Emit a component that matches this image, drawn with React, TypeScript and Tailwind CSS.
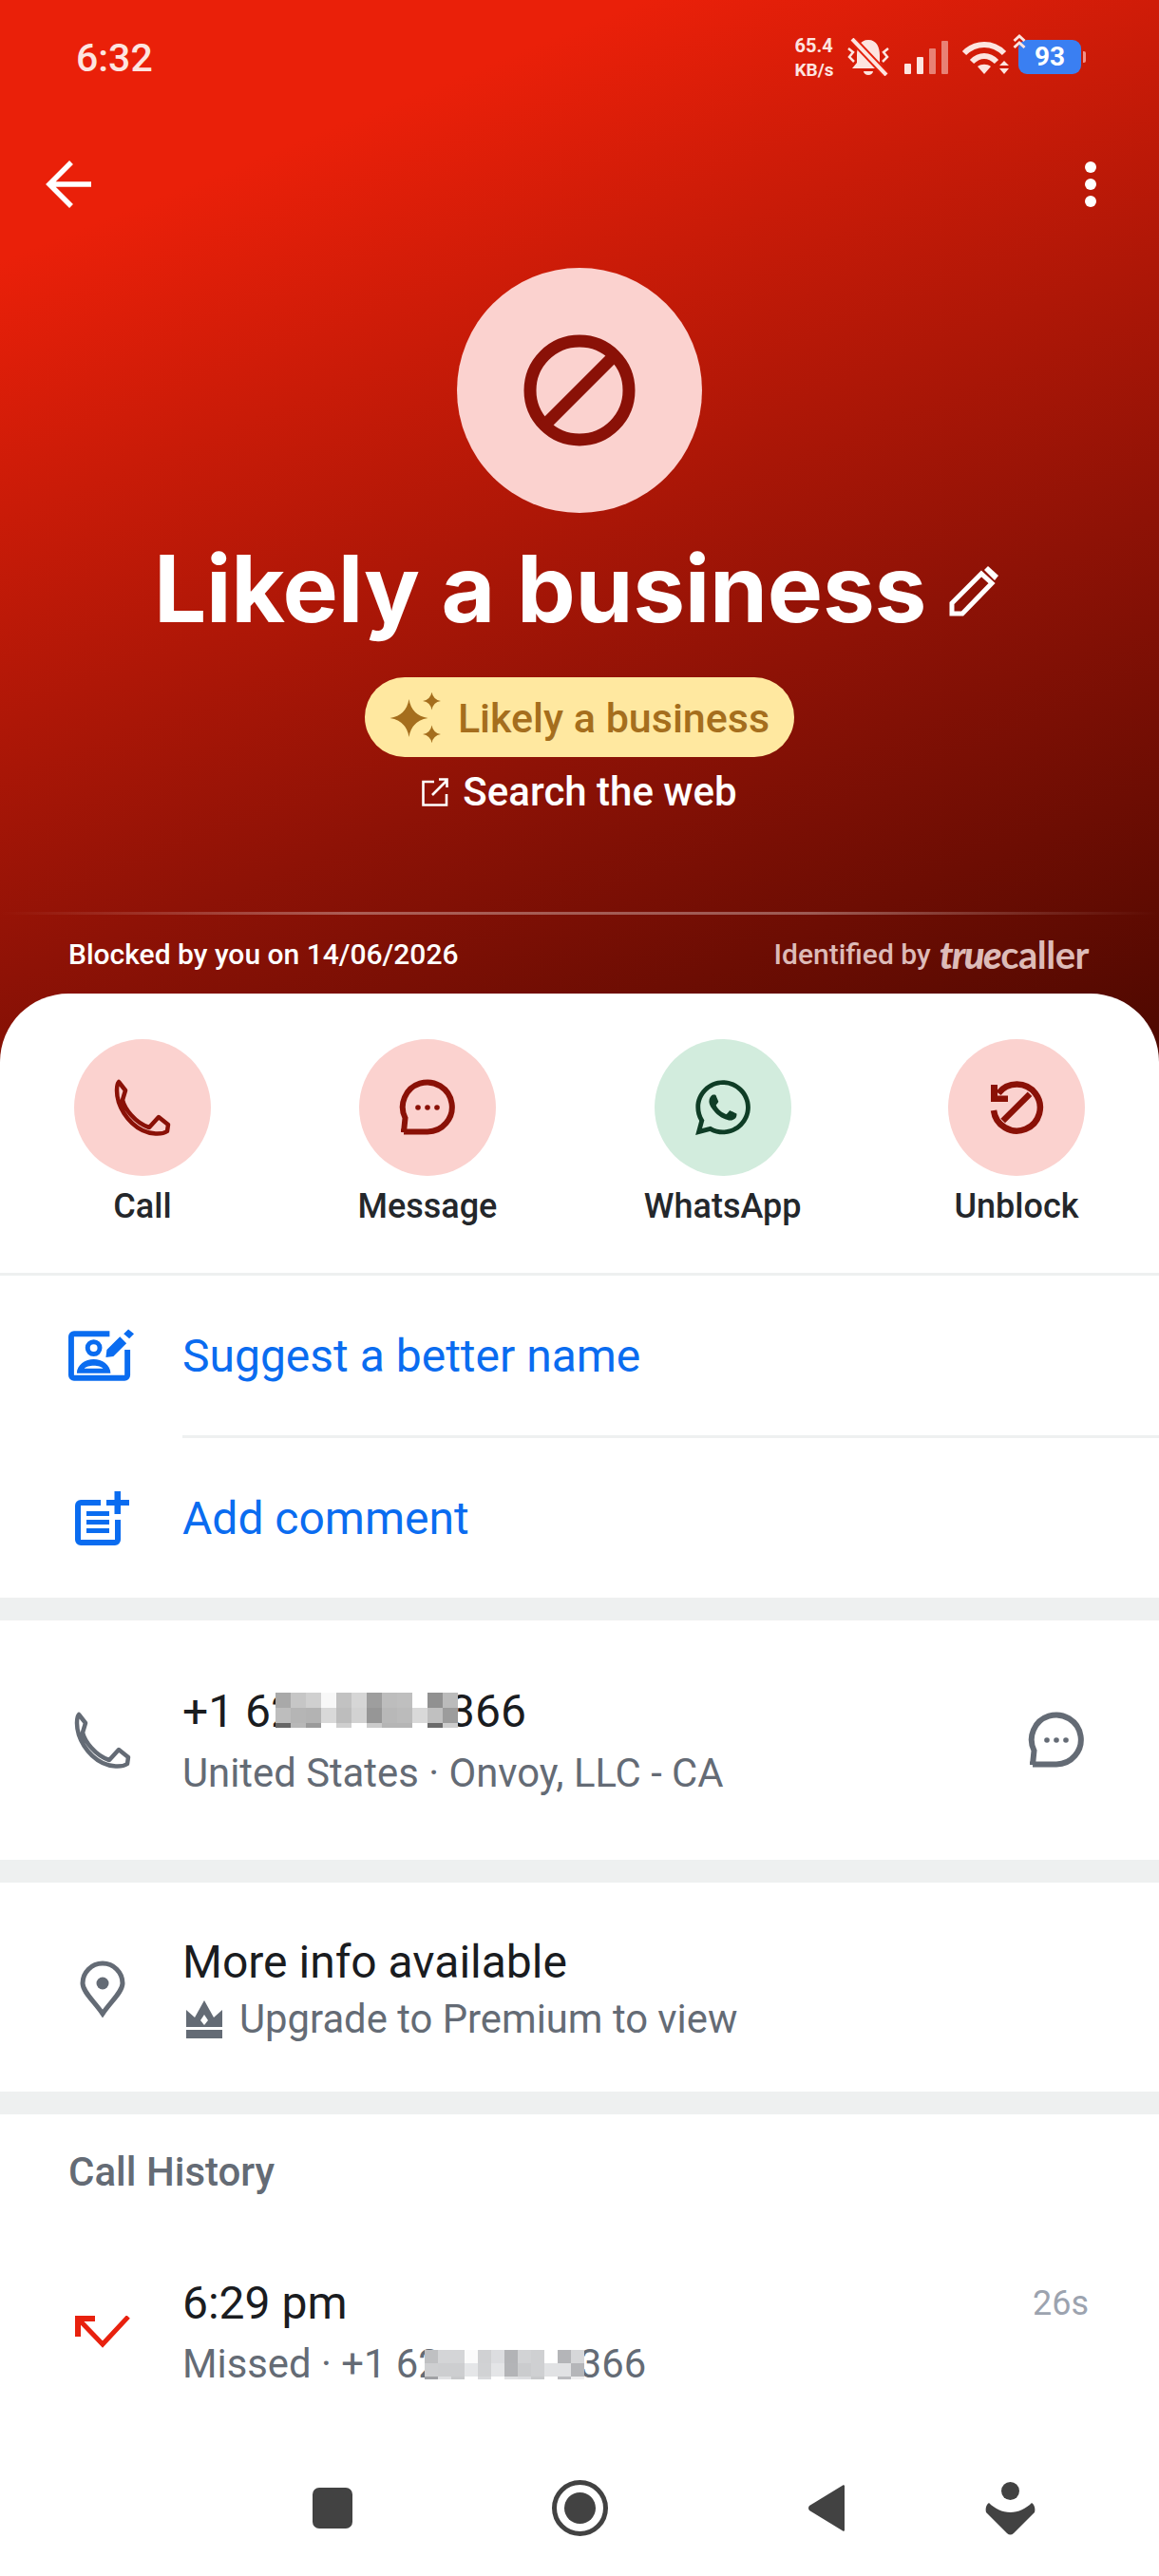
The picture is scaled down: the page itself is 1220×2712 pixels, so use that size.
import React from 'react';
import { FaWhatsapp } from 'react-icons/fa';

const darkMosaic = [
  ['#a9a9a9', '#c6c6c6', '#d0d0d0', '#f8f8f8', '#c2c2c2', '#d6d6d6', '#9e9e9e', '#bdbdbd', '#bfbfbf', '#ffffff', '#919191', '#bbbbbb'],
  ['#bdbdbd', '#b5b5b5', '#b3b3b3', '#d9d9d9', '#bdbdbd', '#d2d2d2', '#969696', '#b8b8b8', '#bbbbbb', '#d9d9d9', '#c0c0c0', '#9c9c9c'],
  ['#666666', '#b8b8b8', '#9a9a9a', '#ffffff', '#cfcfcf', '#ffffff', '#cbcbcb', '#b5b5b5', '#b5b5b5', '#ffffff', '#6a6a6a', '#cccccc'],
];

const lightMosaic = [
  ['#bfc0c2', '#d4d5d7', '#d4d5d7', '#fbfbfb', '#d0d1d3', '#dcdde0', '#b2b3b6', '#d2d3d5', '#cfd0d2', '#ffffff', '#b4b5b8', '#d6d7d9'],
  ['#cecfd1', '#cdced0', '#cdced0', '#e5e6e8', '#d1d2d4', '#e4e5e7', '#b3b4b7', '#cbccce', '#cfd0d2', '#e1e2e4', '#e1e2e4', '#b5b6b9'],
  ['#a0a1a4', '#e0e1e3', '#c8c9cb', '#ffffff', '#d9dadc', '#ffffff', '#e0e1e3', '#dcdde0', '#c8c9cb', '#ffffff', '#bbbcbf', '#eeeeef'],
];

function Mosaic({ rows, cell, last, className }: { rows: string[][]; cell: number; last: number; className: string }) {
  return (
    <div className={`absolute ${className}`}>
      {rows.map((row, i) => (
        <div key={i} className="flex">
          {row.map((c, j) => (
            <div key={j} style={{ width: cell, height: i === 2 ? last : cell, background: c }} />
          ))}
        </div>
      ))}
    </div>
  );
}

function PhoneIcon({ color }: { color: string }) {
  return (
    <svg width="60" height="60" viewBox="0 0 60 60" fill="none" stroke={color} strokeWidth="4.5" strokeLinejoin="round">
      <path d="M5 3 L12 12 L9 22 C11 31 22 46 37 51 L47 40 L57 48 L56 55 C50 59 38 58 30 54 C14 46 3 28 3 12 C3 8 3 5 5 3 Z" />
    </svg>
  );
}

function BubbleIcon({ color }: { color: string }) {
  return (
    <svg width="60" height="60" viewBox="0 0 60 60" fill="none">
      <path d="M5 56 L6.5 41 A26 26 0 1 1 30 55.5 H5 Z" stroke={color} strokeWidth="6" strokeLinejoin="miter" />
      <circle cx="20" cy="30" r="2.8" fill={color} />
      <circle cx="30" cy="30" r="2.8" fill={color} />
      <circle cx="40" cy="30" r="2.8" fill={color} />
    </svg>
  );
}

function StarIcon() {
  const star = (x: number, y: number, r: number) => {
    const k = r * 0.14;
    return `M${x} ${y - r} Q${x + k} ${y - k} ${x + r} ${y} Q${x + k} ${y + k} ${x} ${y + r} Q${x - k} ${y + k} ${x - r} ${y} Q${x - k} ${y - k} ${x} ${y - r} Z`;
  };
  return (
    <svg width="54" height="53" viewBox="0 0 54 53" fill="#a56e1d">
      <path d={star(20.5, 27, 20)} />
      <path d={star(44.5, 9, 9.5)} />
      <path d={star(44.5, 44, 9.5)} />
    </svg>
  );
}

function StatusBar() {
  return (
    <div className="flex h-[120px] items-center justify-between pl-[80px] pr-[77px] text-[#fde5e0]">
      <span className="mt-[3px] text-[41px] font-medium leading-none">6:32</span>
      <div className="flex items-center">
        <div className="flex w-[44px] flex-col font-bold leading-none">
          <span className="text-[20px]">65.4</span>
          <span className="mt-[6px] text-[19px]">KB/s</span>
        </div>
        <svg className="ml-[9px]" width="48" height="40" viewBox="0 0 48 40" fill="#fde5e0">
          <path d="M24 2 C15 2 12 10 12 18 V26 L7 32 H41 L36 26 V18 C36 10 33 2 24 2 Z" />
          <path d="M19 35 H29 A5 4 0 0 1 19 35 Z" />
          <path d="M3 11 L8 15 L4 20 L9 25 M45 11 L40 15 L44 20 L39 25" fill="none" stroke="#fde5e0" strokeWidth="2.5" />
          <path d="M7 1 L43 39" stroke="#e5200a" strokeWidth="8" />
          <path d="M7 1 L43 39" stroke="#fde5e0" strokeWidth="4" />
        </svg>
        <div className="ml-[14px] flex items-end gap-[5.5px]">
          <div className="h-[11px] w-[7.5px] rounded-[1px] bg-[#fde5e0]" />
          <div className="h-[18px] w-[7.5px] rounded-[1px] bg-[#fde5e0]" />
          <div className="h-[27px] w-[7.5px] rounded-[1px] bg-[#fde5e0]/50" />
          <div className="h-[35px] w-[7.5px] rounded-[1px] bg-[#fde5e0]/50" />
        </div>
        <svg className="ml-[14px]" width="50" height="38" viewBox="0 0 50 38" fill="none">
          <path d="M3 15 C15 3 33 3 45 15" stroke="#fde5e0" strokeWidth="6" />
          <path d="M11 24 C19 16 29 16 37 24" stroke="#fde5e0" strokeWidth="6" />
          <path d="M17 29 C21 26 27 26 31 29 L24 37 Z" fill="#fde5e0" />
          <path d="M45 23 L50 28 H40 Z M40 31 H50 L45 37 Z" fill="#fde5e0" />
        </svg>
        <div className="relative ml-[10px] flex items-center">
          <div className="flex h-[36px] w-[66px] items-center justify-center rounded-[9px] bg-[#3a7ff2] text-[28px] font-bold leading-none text-white">93</div>
          <div className="ml-[2px] h-[12px] w-[3px] rounded-r-[2px] bg-[#f0938a]" />
          <svg className="absolute -left-[6px] -top-[7px]" width="14" height="18" viewBox="0 0 14 18" fill="none" stroke="#fde5e0" strokeWidth="3">
            <path d="M1.5 8 L7 3 L12.5 8 M1.5 15 L7 10 L12.5 15" />
          </svg>
        </div>
      </div>
    </div>
  );
}

function Hero() {
  return (
    <div className="flex h-[1120px] flex-col bg-[linear-gradient(158deg,#ea2009_17%,#8e1206_64%,#4c0800_100%)] font-['Roboto',sans-serif] text-white">
      <StatusBar />
      <div className="mt-[36px] flex h-[76px] items-center justify-between pl-[48px] pr-[66px]">
        <svg width="48" height="50" viewBox="0 0 48 50" fill="none" stroke="white" strokeWidth="5.5">
          <path d="M48 25 H5 M27 2 L4 25 L27 48" />
        </svg>
        <div className="flex flex-col gap-[6px]">
          <div className="h-[12px] w-[12px] rounded-full bg-white" />
          <div className="h-[12px] w-[12px] rounded-full bg-white" />
          <div className="h-[12px] w-[12px] rounded-full bg-white" />
        </div>
      </div>
      <div className="mt-[50px] flex h-[258px] w-[258px] items-center justify-center self-center rounded-full bg-[#fbd2cf]">
        <svg width="118" height="118" viewBox="0 0 118 118" fill="none" stroke="#8a1107" strokeWidth="13">
          <circle cx="59" cy="59" r="52" />
          <path d="M95 23 L23 95" />
        </svg>
      </div>
      <div className="mt-[20px] flex h-[120px] items-center justify-center gap-[24px] pr-[7px]">
        <span className="font-['Inter',sans-serif] text-[98px] font-bold leading-[120px] tracking-[-0.3px]">Likely a business</span>
        <svg className="mt-[4px]" width="52" height="54" viewBox="0 0 52 54" fill="none" stroke="white" strokeWidth="5">
          <path d="M3 51 V40 L34 9 L45 19 L14 51 Z" />
          <path d="M37 5 L41 1 L52 11 L48 16 Z" fill="white" stroke="none" />
        </svg>
      </div>
      <div className="mt-[33px] flex h-[84px] items-center gap-[18px] self-center rounded-full bg-[#ffe8a0] px-[26px] text-[#a56e1d]">
        <StarIcon />
        <span className="pt-[2px] text-[43px] font-medium leading-none">Likely a business</span>
      </div>
      <div className="mt-[15px] flex h-[44px] items-center justify-center gap-[15px]">
        <svg width="28" height="30" viewBox="0 0 28 30" fill="none" stroke="white" strokeWidth="2.6">
          <path d="M13 4 H1.5 V28.5 H26 V17 M11 18 L26 3 M18 1.5 H26.5 V10" />
        </svg>
        <span className="text-[42px] font-medium leading-none">Search the web</span>
      </div>
      <div className="mt-[104px] h-[3px] bg-[linear-gradient(90deg,transparent,rgba(255,255,255,0.32)_30%,rgba(255,255,255,0.32)_70%,transparent)]" />
      <div className="mt-[20px] flex h-[44px] items-center justify-between pl-[72px] pr-[74px]">
        <span className="text-[30px] font-medium leading-none">Blocked by you on 14/06/2026</span>
        <div className="flex items-center text-[#ddbbb8]">
          <span className="text-[30px] font-medium leading-none">Identified by</span>
          <span className="ml-[9px] font-['Lato',sans-serif] text-[40px] font-black italic leading-none tracking-[-1.5px]">true</span>
          <span className="font-['Lato',sans-serif] text-[40px] font-bold leading-none tracking-[-0.5px]">caller</span>
        </div>
      </div>
    </div>
  );
}

function Action({ label, bg, icon }: { label: string; bg: string; icon: React.ReactNode }) {
  return (
    <div className="flex flex-col items-center">
      <div className={`flex h-[144px] w-[144px] items-center justify-center rounded-full ${bg}`}>{icon}</div>
      <span className="mt-[10px] text-[36px] font-medium leading-[44px] text-[#24272b]">{label}</span>
    </div>
  );
}

function Band() {
  return <div className="h-[24px] bg-[#eef0f0]" />;
}

function Row({ icon, className, children }: { icon: React.ReactNode; className: string; children: React.ReactNode }) {
  return (
    <div className={`flex items-center ${className}`}>
      <div className="ml-[72px] mr-[49px] flex w-[71px] shrink-0 justify-center">{icon}</div>
      {children}
    </div>
  );
}

export default function App() {
  return (
    <div className="flex h-[2712px] w-[1220px] flex-col overflow-hidden bg-white font-['Roboto',sans-serif]">
      <Hero />
      <div className="relative -mt-[74px] rounded-t-[72px] bg-white">
        <div className="flex justify-between px-[78px] pb-[48px] pt-[48px]">
          <Action label="Call" bg="bg-[#fbd2cf]" icon={<PhoneIcon color="#8a1107" />} />
          <Action label="Message" bg="bg-[#fbd2cf]" icon={<BubbleIcon color="#8a1107" />} />
          <Action label="WhatsApp" bg="bg-[#d2ecdd]" icon={<FaWhatsapp size={66} color="#0f3d26" />} />
          <Action
            label="Unblock"
            bg="bg-[#fbd2cf]"
            icon={
              <svg width="60" height="60" viewBox="0 0 60 60" fill="none" stroke="#8a1107" strokeWidth="6.5">
                <path d="M11 15 A24.5 24.5 0 1 1 6 33" />
                <path d="M44 15.7 L15.7 44" />
                <path d="M3 6 H10 V17.5 H21 V24 H3 Z" fill="#8a1107" stroke="none" />
              </svg>
            }
          />
        </div>
        <div className="h-[3px] bg-[#eef0f0]" />
        <Row
          className="h-[168px]"
          icon={
            <svg width="72" height="56" viewBox="0 0 72 56" fill="none">
              <path d="M44 5 H6 A3 3 0 0 0 3 8 V49 A3 3 0 0 0 6 52 H60 A3 3 0 0 0 63 49 V22" stroke="#0a6cf0" strokeWidth="6" />
              <circle cx="27" cy="20" r="6.5" stroke="#0a6cf0" strokeWidth="5" />
              <path d="M9 47 C9 38 18 32 27 32 C36 32 45 38 45 47 Z M17 42 C20 38 34 38 37 42 Z" fill="#0a6cf0" fillRule="evenodd" />
              <path d="M40 30 L41 22 L55 8 L62 15 L48 29 Z M59 5 L64 0 L70 5 L65 10 Z" fill="#0a6cf0" />
            </svg>
          }
        >
          <span className="pt-[2px] text-[48px] leading-none text-[#0a6cf0]">Suggest a better name</span>
        </Row>
        <div className="ml-[192px] h-[3px] bg-[#eef0f0]" />
        <Row
          className="h-[168px]"
          icon={
            <svg width="57" height="57" viewBox="0 0 57 57" fill="none">
              <path d="M27 12 H6 A3 3 0 0 0 3 15 V51 A3 3 0 0 0 6 54 H42 A3 3 0 0 0 45 51 V30" stroke="#0a6cf0" strokeWidth="6" />
              <path d="M41.5 0 H48 V9 H57 V15 H48 V24 H41.5 V15 H33 V9 H41.5 Z" fill="#0a6cf0" />
              <path d="M12 21 H36 V26 H12 Z M12 30 H36 V35 H12 Z M12 39 H36 V44 H12 Z" fill="#0a6cf0" />
            </svg>
          }
        >
          <span className="pt-[2px] text-[48px] leading-none text-[#0a6cf0]">Add comment</span>
        </Row>
        <Band />
        <div className="relative flex h-[252px] items-center pr-[78px]">
          <div className="ml-[72px] mr-[49px] flex w-[71px] shrink-0 justify-center">
            <PhoneIcon color="#646b75" />
          </div>
          <div className="flex flex-1 flex-col">
            <div className="relative flex text-[48px] leading-[56px] text-[#1a1c1f]">
              <span>+1 62</span>
              <span className="w-[161px]" />
              <span>366</span>
              <Mosaic rows={darkMosaic} cell={16} last={5} className="left-[98px] top-[8px]" />
            </div>
            <span className="mt-[13px] text-[41.8px] leading-[48px] text-[#646b75]">United States · Onvoy, LLC - CA</span>
          </div>
          <BubbleIcon color="#646b75" />
        </div>
        <Band />
        <Row
          className="h-[220px] pt-[3px]"
          icon={
            <svg width="48" height="60" viewBox="0 0 48 60" fill="none">
              <path d="M24 56 C16 44 3 33 3 24 A21 21 0 0 1 45 24 C45 33 32 44 24 56 Z" stroke="#646b75" strokeWidth="5" />
              <circle cx="24" cy="24" r="6.5" fill="#646b75" />
            </svg>
          }
        >
          <div className="flex flex-col">
            <span className="text-[48px] leading-[56px] text-[#1a1c1f]">More info available</span>
            <div className="mt-[8px] flex h-[48px] items-center">
              <svg className="ml-[4px]" width="38" height="40" viewBox="0 0 38 40" fill="#646b75">
                <path d="M0 10 L9 18 L19 0 L29 18 L38 10 V28 H0 Z" />
                <path d="M0 31 H38 V40 H0 Z" />
                <path d="M19 15 L23 21 L19 26 L15 21 Z" fill="white" />
              </svg>
              <span className="ml-[18px] text-[41.8px] leading-[48px] text-[#646b75]">Upgrade to Premium to view</span>
            </div>
          </div>
        </Row>
        <Band />
        <div className="flex h-[122px] items-center pl-[72px]">
          <span className="text-[42px] font-medium leading-none text-[#646b75]">Call History</span>
        </div>
        <div className="flex h-[214px] items-center pr-[74px]">
          <div className="ml-[72px] mr-[49px] flex w-[71px] shrink-0 justify-center">
            <svg width="58" height="34" viewBox="0 0 58 34" fill="none" stroke="#e8210e" strokeWidth="5">
              <path d="M56 1 L29 30 L4 4" />
              <path d="M3 22 V3 H21" strokeWidth="6" />
            </svg>
          </div>
          <div className="flex flex-1 flex-col">
            <div className="flex items-center justify-between">
              <span className="text-[48px] leading-[56px] text-[#1a1c1f]">6:29 pm</span>
              <span className="text-[36px] leading-none text-[#9ca3af]">26s</span>
            </div>
            <div className="relative mt-[12px] flex text-[41.8px] leading-[48px] text-[#646b75]">
              <span>Missed · +1 62</span>
              <span className="w-[146px]" />
              <span>366</span>
              <Mosaic rows={lightMosaic} cell={14} last={3} className="left-[255px] top-[9px]" />
            </div>
          </div>
        </div>
        <div className="ml-[329px] mt-[49px] flex items-center">
          <div className="h-[43px] w-[42px] rounded-[7px] bg-[#424242]" />
          <div className="ml-[210px] flex h-[59px] w-[59px] items-center justify-center rounded-full border-[5px] border-[#424242]">
            <div className="h-[33px] w-[33px] rounded-full bg-[#424242]" />
          </div>
          <svg className="ml-[210px]" width="40" height="49" viewBox="0 0 40 49" fill="#424242">
            <path d="M39 1 V48 L38 49 L2 27 Q0 24.5 2 22 L38 0 Z" />
          </svg>
          <svg className="ml-[147px]" width="53" height="56" viewBox="0 0 53 56" fill="#424242">
            <circle cx="26.5" cy="9.5" r="9.5" />
            <path d="M4 22 C10 28 18 32 26.5 32 C35 32 43 28 49 22 C52 24 53 28 52 32 L30 54 Q26.5 57 23 54 L1 32 C0 28 1 24 4 22 Z" />
          </svg>
        </div>
      </div>
    </div>
  );
}
